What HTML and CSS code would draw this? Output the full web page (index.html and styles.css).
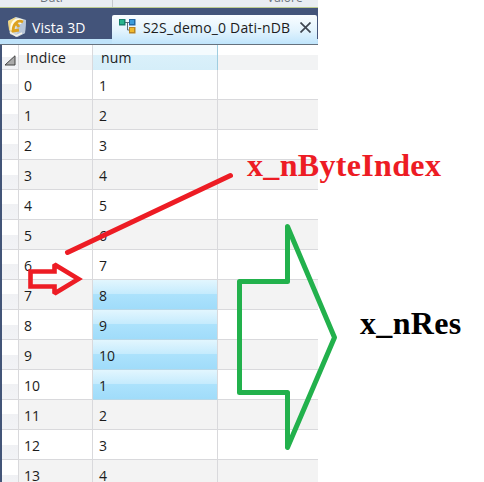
FILE: index.html
```html
<!DOCTYPE html>
<html lang="it">
<head>
<meta charset="utf-8">
<title>S2S_demo_0 Dati-nDB</title>
<link rel="stylesheet" href="styles.css">
</head>
<body>
<main class="window">
  <div class="ribbon"><span class="group group-data">Dati</span><span class="group group-value">Valore</span></div>
  <nav class="tabs">
    <div class="tab">
      <svg class="icon3d" width="20" height="20" viewBox="0 0 20 20">
        <path d="M1 4 9 0l10 3-1 13-8 4-7-3z" fill="#cbd5dc"/>
        <path d="M1 4 9 0 6 7 5 15l-3-2z" fill="#f2d57d"/>
        <path d="m11 5 8-2-1 13-8 4z" fill="#b8c6d8"/>
        <path d="M15 5C8 2 5 7 6 13" fill="none" stroke="#fffbe8" stroke-width="5"/>
        <path d="M16 5C10 2 6 8 6 14l6-1M9 6l3 4" fill="none" stroke="#dda21f" stroke-width="2.800"/>
        <path d="m3 15 6 4 6-3" fill="none" stroke="#f7f3e7" stroke-width="1.500"/>
      </svg>
      <span class="label-3d">Vista 3D</span>
    </div>
    <div class="tab active">
      <svg class="icon-tree" width="17" height="15" viewBox="0 0 17 15">
        <path d="M6 3.500h5M8.500 3.500v7.500h3" fill="none" stroke="#5c6a75"/>
        <path d="M0 0h6.500v6.500H0z" fill="#17806d"/><path d="M1 1h4v4H1z" fill="#28b58c"/>
        <path d="M10 0h6.500v6.500H10z" fill="#2368a5"/><path d="M11 1h4v4h-4z" fill="#3d9ddb"/>
        <path d="M10 8h6.500v6.500H10z" fill="#b88525"/><path d="M11 9h4v4h-4z" fill="#f1b92b"/>
      </svg>
      <span class="label-db">S2S_demo_0 Dati-nDB</span>
      <svg class="close" width="11" height="11" viewBox="0 0 11 11"><path d="m.5.500 10 10m0-10-10 10" fill="none" stroke="#3e4650" stroke-width="1.700"/></svg>
    </div>
  </nav>
  <section class="grid">
    <div class="row head"><span class="handle"><svg width="12" height="11" viewBox="0 0 12 11"><path d="M11 .8V10H1z" fill="#aaa" stroke="#444"/></svg></span><span>Indice</span><span>num</span><span></span></div>
    <div class="row"><span class="handle"></span><span>0</span><span>1</span><span></span></div>
    <div class="row"><span class="handle"></span><span>1</span><span>2</span><span></span></div>
    <div class="row"><span class="handle"></span><span>2</span><span>3</span><span></span></div>
    <div class="row"><span class="handle"></span><span>3</span><span>4</span><span></span></div>
    <div class="row"><span class="handle"></span><span>4</span><span>5</span><span></span></div>
    <div class="row"><span class="handle"></span><span>5</span><span>6</span><span></span></div>
    <div class="row"><span class="handle"></span><span>6</span><span>7</span><span></span></div>
    <div class="row"><span class="handle"></span><span>7</span><span class="selected">8</span><span></span></div>
    <div class="row"><span class="handle"></span><span>8</span><span class="selected">9</span><span></span></div>
    <div class="row"><span class="handle"></span><span>9</span><span class="selected">10</span><span></span></div>
    <div class="row"><span class="handle"></span><span>10</span><span class="selected">1</span><span></span></div>
    <div class="row"><span class="handle"></span><span>11</span><span>2</span><span></span></div>
    <div class="row"><span class="handle"></span><span>12</span><span>3</span><span></span></div>
    <div class="row"><span class="handle"></span><span>13</span><span>4</span><span></span></div>
  </section>
</main>
<svg class="marks" width="484" height="482" viewBox="0 0 484 482">
  <g fill="none" stroke-width="5" stroke-linejoin="round" stroke-linecap="round">
    <path d="M67.500 252.500 230.500 175.500" stroke="#ed1c24"/>
    <path d="M30.500 271.500h24v-7L78.500 279l-24 14.500v-7h-24z" stroke="#ed1c24" stroke-width="4.600" stroke-linejoin="miter" stroke-miterlimit="2"/>
    <path d="M239.500 281.500h48v-55l47 111-47 110v-55h-48z" stroke="#22b14c"/>
  </g>
</svg>
<div class="note note-index">x_nByteIndex</div>
<div class="note note-res">x_nRes</div>
</body>
</html>
```

FILE: styles.css
```css
* { box-sizing: border-box; }
body {
  margin: 0;
  width: 484px;
  height: 482px;
  overflow: hidden;
  position: relative;
  background: #fff;
  font: 14px/20px "Open Sans", "Noto Sans", sans-serif;
  color: #1c1c1c;
}
.window { width: 318px; height: 482px; overflow: hidden; background: #435578; }
.ribbon {
  display: flex;
  height: 8px;
  overflow: hidden;
  background: #e9edf2;
  border-bottom: 1px solid #bccb91;
  color: #6e7580;
  font-size: 12px;
  line-height: 12px;
}
.group { margin-top: -8px; height: 16px; }
.group-data { width: 113px; padding-left: 40px; border-right: 1px solid #c5c9ce; }
.group-value { padding-left: 154px; }
.tabs {
  display: flex;
  height: 37px;
  padding: 7px 1px 0 2px;
  background: linear-gradient(#43547a 0 31px, #bfe3fa 31px 36px, #66717d 36px);
}
.tab { display: flex; width: 110px; height: 24px; padding-left: 5px; white-space: nowrap; }
.icon3d { margin-top: 2px; }
.label-3d { margin: 3px 0 0 5px; color: #fff; letter-spacing: .05px; }
.active {
  width: 205px;
  height: 29px;
  padding-left: 7px;
  border-radius: 2px 2px 0 0;
  background: linear-gradient(#fafdff, #e2f3fd 55%, #c0e5fc);
}
.icon-tree { margin-top: 4px; }
.label-db { width: 150px; margin: 3px 0 0 7px; letter-spacing: .18px; }
.close { margin: 7px 0 0 7px; }
.grid { margin-left: 2px; background: #fff; }
.row { display: grid; grid-template-columns: 17px 74px 125px 100px; height: 30px; }
.row > span { padding: 6px 0 0 5px; border-right: 1px solid #d9d9dc; border-bottom: 1px solid #d9d9dc; }
.row > span:nth-child(3) { padding-left: 6px; }
.row > span:last-child { border-right: 0; }
.row:nth-child(odd) { background: #f3f3f3; }
.row > .handle { padding: 0; background: linear-gradient(#fff 0 50%, #f0f1f4 50%, #f2f3f6); }
.row.head { height: 25px; background: linear-gradient(#fff 0 10px, #f2f3f4 10px); }
.row.head > span { padding: 3px 0 0 7px; border-bottom: 0; letter-spacing: .15px; }
.row.head > .handle { padding: 10px 0 0 2px; line-height: 0; border-bottom: 1px solid #d9d9dc; }
.row.head > span:nth-child(3) { padding-left: 8px; background: linear-gradient(#f4fbfe 0 10px, #daf0fa 10px, #d5eef9); border-right-color: #9fcde0; }
.row > .selected {
  background: linear-gradient(#e2f6fe, #c5ebfd 48%, #ace2fc 50%, #a0dcfa);
  border-bottom-color: #b6d8e9;
}
.marks { position: absolute; left: 0; top: 0; }
.note { position: absolute; font: bold 32px/36px "Liberation Serif", serif; letter-spacing: .33px; white-space: nowrap; }
.note-index { left: 247px; top: 147px; color: #ed1c24; }
.note-res { left: 360px; top: 305px; color: #000; }
```
